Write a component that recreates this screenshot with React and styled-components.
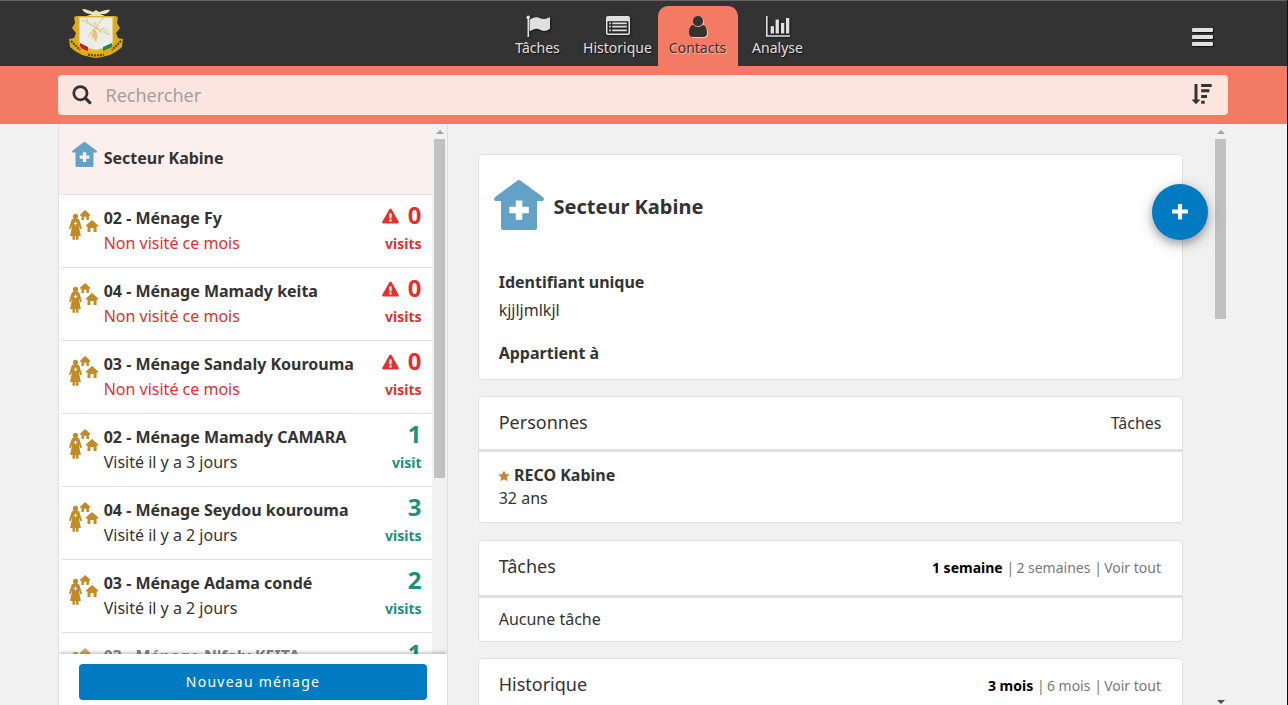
import React from "react";
import styled, { createGlobalStyle, css } from "styled-components";

const colors = {
  ink: "#333333",
  coral: "#f47b63",
  line: "#e0e0e0",
  page: "#f1f1f1",
  red: "#e33030",
  green: "#218e7f",
  blue: "#007ac0",
  gold: "#c38a28",
  house: "#63a2c6",
};

const GlobalStyle = createGlobalStyle`
  *, *::before, *::after { box-sizing: border-box; }
  html, body { margin: 0; height: 100%; overflow: hidden; }
  body { font: 16px/25px "Noto Sans", sans-serif; color: ${colors.ink}; background: ${colors.page}; }
  button { font: inherit; border: 0; padding: 0; margin: 0; background: none; color: inherit; }
  svg { display: block; flex: none; }
  h1, h2, p { margin: 0; }
`;

const Page = styled.div`
  height: 705px;
  display: flex;
  flex-direction: column;
  overflow: hidden;
  border-right: 1px solid #111;
`;

const TopBar = styled.header`
  height: 66px;
  flex: none;
  display: grid;
  grid-template-columns: 497.5px 320px 1fr;
  background: #333;
  border-top: 1px solid #626562;
`;

const LogoSlot = styled.div`
  padding: 6px 0 0 66px;
`;

const Tabs = styled.nav`
  display: flex;
  padding-top: 5px;
`;

const Tab = styled.a`
  width: 80px;
  display: flex;
  flex-direction: column;
  align-items: center;
  padding-top: 8px;
  font-size: 14px;
  line-height: 20px;
  color: #e0e0e0;
  text-shadow: 1px 1px 1px rgba(0, 0, 0, 0.75);
  border-radius: 10px 10px 0 0;
  svg { filter: drop-shadow(1px 1px 1px rgba(0, 0, 0, 0.6)); }
  ${(p) => p.$active && css`
    background: ${colors.coral};
    color: ${colors.ink};
    text-shadow: 1px 1px 1px rgba(255, 255, 255, 0.5);
    svg { filter: drop-shadow(1px 1px 0.5px rgba(255, 255, 255, 0.5)); }
  `}
`;

const MenuButton = styled.button`
  justify-self: end;
  align-self: start;
  margin: 27px 74px 0 0;
  display: flex;
  flex-direction: column;
  gap: 3px;
`;

const MenuBar = styled.span`
  width: 21px;
  height: 4px;
  border-radius: 1px;
  background: #e0e0e0;
  box-shadow: 1px 1px 1px rgba(0, 0, 0, 0.7);
`;

const SearchBar = styled.div`
  height: 58px;
  flex: none;
  background: ${colors.coral};
  padding: 9px 59px 0 58px;
`;

const SearchField = styled.div`
  height: 40px;
  display: flex;
  align-items: center;
  border-radius: 4px;
  background: #fde5df;
  padding: 0 16px 0 14px;
`;

const SearchInput = styled.input`
  flex: 1;
  min-width: 0;
  margin-left: 13.5px;
  padding: 0;
  border: 0;
  outline: 0;
  background: transparent;
  font: 18px/26px "Noto Sans", sans-serif;
  &::placeholder { color: #a0a0a0; opacity: 1; }
`;

const Body = styled.main`
  flex: 1;
  min-height: 0;
  display: flex;
  padding: 0 59px 0 58px;
`;

const Sidebar = styled.section`
  width: 390px;
  flex: none;
  display: flex;
  flex-direction: column;
  background: #fff;
  border: solid ${colors.line};
  border-width: 0 1px;
`;

const SidebarScroll = styled.div`
  flex: 1;
  min-height: 0;
  display: flex;
  overflow: hidden;
`;

const ContactList = styled.div`
  flex: 1;
  min-width: 0;
`;

const ContactRow = styled.div`
  height: ${(p) => (p.$selected ? 71 : 73)}px;
  display: flex;
  padding: ${(p) => (p.$selected ? "18px 10px 0 12.5px" : "10px 10.5px 0 9.5px")};
  background: ${(p) =>
    p.$selected
      ? `linear-gradient(90deg, transparent 2px, ${colors.line} 3px) bottom / 100% 1px no-repeat, #fcf0ee`
      : `linear-gradient(90deg, transparent 2px, ${colors.line} 3px) bottom / 100% 1px no-repeat`};
`;

const RowText = styled.div`
  flex: 1;
  min-width: 0;
  padding-left: ${(p) => (p.$selected ? 7.2 : 5.2)}px;
  padding-top: ${(p) => (p.$selected ? 4 : 1)}px;
  white-space: nowrap;
  opacity: ${(p) => (p.$faded ? 0.6 : 1)};
`;

const IconSlot = styled.div`
  padding-top: ${(p) => p.$top || 0}px;
  opacity: ${(p) => (p.$faded ? 0.75 : 1)};
`;

const Name = styled.div`
  font-weight: 700;
`;

const Status = styled.div`
  color: ${(p) => (p.$late ? colors.red : colors.ink)};
`;

const Visits = styled.div`
  display: flex;
  flex-direction: column;
  align-items: flex-end;
  font-weight: 700;
  color: ${(p) => (p.$late ? colors.red : colors.green)};
`;

const Count = styled.div`
  display: flex;
  align-items: center;
  gap: 8.5px;
  font-size: 24px;
  line-height: 24px;
  height: 26px;
  padding-bottom: 7px;
  svg { margin-top: 2px; }
`;

const Unit = styled.div`
  font-size: 14px;
  line-height: 26px;
`;

const SidebarFooter = styled.footer`
  height: 51px;
  flex: none;
  position: relative;
  background: #fff;
  padding: 10px 20px 0;
  box-shadow: 0 -1px 4px rgba(0, 0, 0, 0.3);
  clip-path: inset(-8px 0 0 0);
`;

const PrimaryButton = styled.button`
  width: 100%;
  height: 36px;
  border-radius: 4px;
  background: ${colors.blue};
  color: #fff;
  font-size: 14px;
  letter-spacing: 1.25px;
  line-height: 36px;
`;

const ScrollTrack = styled.div`
  width: 15px;
  flex: none;
  display: flex;
  flex-direction: column;
  align-items: center;
  background: ${colors.page};
`;

const Arrow = styled.span`
  margin: ${(p) => (p.$down ? "auto 0 1px" : "6px 0 5px")};
  border: solid transparent;
  border-width: 0 4px;
  ${(p) => (p.$down ? "border-top: 4px solid #505050" : "border-bottom: 4px solid #a3a3a3")};
`;

const Thumb = styled.span`
  width: 11px;
  height: ${(p) => p.$size}px;
  background: #c1c1c1;
`;

const Detail = styled.section`
  position: relative;
  flex: 1;
  min-width: 0;
  display: flex;
  overflow: hidden;
`;

const Cards = styled.div`
  flex: 1;
  min-width: 0;
  padding: 30px 30px 0;
`;

const Card = styled.article`
  height: ${(p) => p.$height}px;
  margin-bottom: ${(p) => p.$gap || 16}px;
  background: #fff;
  border: 1px solid ${colors.line};
  border-radius: 4px;
  overflow: hidden;
`;

const ProfileHeader = styled.div`
  display: flex;
  align-items: center;
  height: 50px;
  margin: 25px 15px 38px;
  gap: 9.5px;
`;

const ProfileName = styled.h1`
  font-size: 20px;
  line-height: 30px;
  margin-top: 3px;
`;

const Field = styled.div`
  padding: 0 19.7px;
  line-height: 28px;
  margin-bottom: 15px;
`;

const Label = styled.div`
  font-weight: 700;
`;

const CardHeader = styled.div`
  height: ${(p) => p.$height || 55}px;
  border-bottom: 3px solid ${colors.line};
  display: flex;
  align-items: center;
  justify-content: space-between;
  padding: 0 21px ${(p) => (p.$height ? 4 : 2)}px 19.7px;
`;

const CardTitle = styled.h2`
  font-size: 18px;
  font-weight: 400;
  line-height: 26px;
`;

const ColumnLabel = styled.span`
  padding-top: 2px;
  margin-right: -0.5px;
`;

const Filters = styled.div`
  display: flex;
  font-size: 14px;
  color: #777;
  padding-top: 2px;
  b { color: #000; }
`;

const Separator = styled.span`
  margin: 0 2.2px 0 3.8px;
`;

const Person = styled.div`
  padding: 12px 19.7px 0;
  line-height: 23px;
  ${Name} { display: flex; align-items: center; gap: 3.5px; }
  svg { margin-left: -0.7px; margin-right: 0.5px; }
`;

const EmptyText = styled.p`
  padding: 9px 19.7px;
`;

const Fab = styled.button`
  position: absolute;
  top: 60px;
  left: 704px;
  width: 56px;
  height: 56px;
  border-radius: 50%;
  background: ${colors.blue};
  display: flex;
  align-items: center;
  justify-content: center;
  box-shadow: 0 4px 8px rgba(0, 0, 0, 0.3), 0 4px 20px rgba(0, 0, 0, 0.14);
`;

const FlagIcon = () => (
  <svg width="24" height="24" viewBox="0 0 24 24" fill="currentColor">
    <circle cx="2.2" cy="3.4" r="1.8" />
    <path d="M1.500 4h1.600v19H1.500zM4 5.500C6 4.500 8 3.200 10.300 3.200c3 0 4.500 1.900 7.300 1.900 2.200 0 4-1 5.400-1.700.6-.3 1 0 1 .6v10.200c0 .5-.2.8-.6 1-1.600.8-3.200 1.700-5.400 1.700-3.200 0-4.500-2.200-7.500-2.200-2.200 0-4.200 1.200-6 2.100-.4.200-.9 0-.9-.6V6.300c0-.4.100-.6.400-.8z" />
  </svg>
);

const ListIcon = () => (
  <svg width="24" height="24" viewBox="0 0 24 24" fill="currentColor">
    <path fillRule="evenodd" d="M2 2h20a2 2 0 0 1 2 2v15a2 2 0 0 1-2 2H2a2 2 0 0 1-2-2V4a2 2 0 0 1 2-2zM2 7.200c-.3 0-.5.200-.5.500v11.100c0 .4.200.6.500.6h20c.3 0 .5-.2.500-.6V7.700c0-.3-.2-.5-.5-.5z" />
    <path d="M3.200 8.600h1.700v1.600H3.200zM6.300 8.600h14.500v1.600H6.300zM3.200 11.800h1.700v1.600H3.200zM6.300 11.800h14.500v1.600H6.300zM3.200 15.600h1.700v1.600H3.200zM6.300 15.600h14.500v1.600H6.300z" />
  </svg>
);

const UserIcon = () => (
  <svg width="24" height="24" viewBox="0 0 24 24" fill="currentColor">
    <circle cx="12" cy="7.100" r="5.100" />
    <path d="M7.500 11c1.200 1.200 2.700 1.900 4.500 1.900s3.300-.7 4.500-1.900c3.300.1 4.500 3.700 4.500 7.900 0 2.400-1.500 4-3.500 4h-11c-2 0-3.500-1.600-3.500-4 0-4.200 1.200-7.800 4.500-7.900z" />
  </svg>
);

const ChartIcon = () => (
  <svg width="26" height="24" viewBox="0 0 26 24" fill="currentColor">
    <path d="M1 2h1.600v19.200H25v1.600H1zM5.700 12.200H9v7.200H5.700zM10.600 5.600h3.300v13.800h-3.300zM16 8.900h3.300v10.500H16zM21 4h3.300v15.400H21z" />
  </svg>
);

const SearchIcon = () => (
  <svg width="20" height="20" viewBox="0 0 20 20" fill="none" stroke="#333">
    <circle cx="8.400" cy="8.200" r="6.600" strokeWidth="2.800" />
    <path d="M13.300 13.100l4.500 4.500" strokeWidth="3.200" strokeLinecap="round" />
  </svg>
);

const SortIcon = () => (
  <svg width="20" height="22" viewBox="0 0 20 22" fill="#333">
    <path d="M2.500 0h3v15.600h2c.5 0 .6.400.3.700l-3.400 3.400c-.3.300-.6.300-.9 0L.200 16.300c-.3-.3-.1-.7.3-.7h2zM9.200 0h10.500v3H9.200zM9.200 5.200h8.200v3H9.200zM9.200 11h5.800v3H9.200zM9.200 16.700h3.500v3H9.200z" />
  </svg>
);

const HouseIcon = ({ size }) => (
  <svg width={size} height={size} viewBox="0 0 50 50" fill={colors.house}>
    <path fillRule="evenodd" d="M23.200.7c1.100-.8 2.500-.8 3.600 0l22 16.200c2 1.500 1.200 4.200-1.300 4.200H43V47.500a2.500 2.500 0 0 1-2.500 2.500h-31A2.500 2.500 0 0 1 7 47.500V21.100H2.500c-2.500 0-3.300-2.700-1.300-4.200zM21.800 20.500v6.300h-6.500v6.500h6.500v6.500h6.500v-6.500h6.500v-6.500h-6.500v-6.300z" />
  </svg>
);

const HouseholdIcon = () => (
  <svg width="30" height="31" viewBox="0 0 30 31" fill={colors.gold}>
    <circle cx="6.500" cy="6.400" r="2.600" />
    <path fillRule="evenodd" d="M4.500 8.700h4c1.100 0 1.700.6 2 1.600l2.300 7.600c.4 1.200-1.300 1.700-1.700.6l-1.300-3L11.900 26H9.500v3.800H7V26H6v3.800H3.500V26H1.100L3.200 15.500l-1.300 3c-.4 1.100-2.100.6-1.700-.6l2.300-7.600c.3-1 .9-1.600 2-1.600zM6 11.800v1.100H4.900v1.200H6v1.100h1.100v-1.100h1.100v-1.200H7.100v-1.100z" />
    <path d="M16.100 0L21.300 4.700v1h-1.400v4.200h-2.500V6.700h-2.500v3.200h-2.400V5.700H11v-1z" />
    <path d="M23 9.900l6.300 5.500v1.200h-1.700v5.300h-3v-4h-3.100v4h-3v-5.300h-1.700v-1.200z" />
  </svg>
);

const WarningIcon = () => (
  <svg width="17" height="16" viewBox="0 0 17 16" fill="currentColor">
    <path fillRule="evenodd" d="M7.400 1.200c.5-.9 1.700-.9 2.200 0l7 12.400c.5.900-.1 1.900-1.100 1.900h-14c-1 0-1.600-1-1.100-1.900zM7.300 5.500l.3 4.900h1.800l.3-4.900zM7.400 11.400v2h2.200v-2z" />
  </svg>
);

const StarIcon = () => (
  <svg width="12" height="12" viewBox="0 0 12 12" fill="#c78330">
    <path d="M6 .5l1.700 3.600 3.900.5-2.800 2.700.7 3.900L6 9.300l-3.500 1.900.7-3.900L.4 4.600l3.900-.5z" />
  </svg>
);

const PlusIcon = () => (
  <svg width="16" height="16" viewBox="0 0 16 16" fill="#fff">
    <path d="M6.900 0h2.200c.6 0 1 .4 1 1v4.900H15c.6 0 1 .4 1 1v2.200c0 .6-.4 1-1 1h-4.900V15c0 .6-.4 1-1 1H6.900c-.6 0-1-.4-1-1v-4.900H1c-.6 0-1-.4-1-1V6.900c0-.6.400-1 1-1h4.900V1c0-.6.4-1 1-1z" transform="translate(0 -.5)" />
  </svg>
);

const CoatOfArms = () => (
  <svg width="60" height="53" viewBox="0 0 60 53">
    <path d="M11 9h38l3 1-1 6 3 5-4 5 2 5 4 1 1-1-1 9-5 4-7 4-8 2-6 1-6-1-8-2-7-4-5-4-1-9 1 1 4-1 2-5-4-5 3-5-1-6z" fill="#dbac18" />
    <path d="M5 34l9 9M55 34l-9 9M22 47.500q8 2 16 0" stroke="#54420e" strokeWidth="2" strokeDasharray="2 1" fill="none" />
    <path d="M13 10h34v25c0 6-9 7-17 10-8-3-17-4-17-10z" fill="#ececea" stroke="#e0b52c" />
    <path d="M14 36l8 4v4c-4-1-7-3-8-5z" fill="#c22035" />
    <path d="M22 41l8 2 7-2v4l-7 1-8-1z" fill="#e8b91c" />
    <path d="M37 40l9-4v4l-9 4z" fill="#138a60" />
    <path d="M16 2c5 0 8 2 11 3l3-2 3 2c3 0 6-3 11-2-3 5-7 4-10 4l5 2H21l5-2c-4 0-8-1-10-5z" fill="#e9e2bb" />
    <path d="M16 13l12 6 16 9M20 12l6 7M37 11l-9 11M29 15v18M28 22l-6 8M30 21l6 5M36 21l6 3" stroke="#dfc47a" strokeWidth="1.200" strokeDasharray="3 1" fill="none" />
    <path d="M27 23l-2 9 3-2 2 6 2-8-3-6z" fill="#dfbd5c" opacity=".7" />
  </svg>
);

const tabs = [
  { label: "Tâches", Icon: FlagIcon },
  { label: "Historique", Icon: ListIcon },
  { label: "Contacts", Icon: UserIcon, active: true },
  { label: "Analyse", Icon: ChartIcon },
];

const households = [
  { name: "02 - Ménage Fy", status: "Non visité ce mois", visits: 0 },
  { name: "04 - Ménage Mamady keita", status: "Non visité ce mois", visits: 0 },
  { name: "03 - Ménage Sandaly Kourouma", status: "Non visité ce mois", visits: 0 },
  { name: "02 - Ménage Mamady CAMARA", status: "Visité il y a 3 jours", visits: 1 },
  { name: "04 - Ménage Seydou kourouma", status: "Visité il y a 2 jours", visits: 3 },
  { name: "03 - Ménage Adama condé", status: "Visité il y a 2 jours", visits: 2 },
  { name: "03 - Ménage N'faly KEITA", visits: 1, faded: true },
];

const FilterGroup = ({ options }) => (
  <Filters>
    {options.map((option, i) => (
      <React.Fragment key={option}>
        {i > 0 && <Separator>|</Separator>}
        {i === 0 ? <b>{option}</b> : <span>{option}</span>}
      </React.Fragment>
    ))}
  </Filters>
);

export default function App() {
  return (
    <Page>
      <GlobalStyle />
      <TopBar>
        <LogoSlot><CoatOfArms /></LogoSlot>
        <Tabs>
          {tabs.map(({ label, Icon, active }) => (
            <Tab key={label} $active={active}>
              <Icon />
              {label}
            </Tab>
          ))}
        </Tabs>
        <MenuButton aria-label="Menu"><MenuBar /><MenuBar /><MenuBar /></MenuButton>
      </TopBar>
      <SearchBar>
        <SearchField>
          <SearchIcon />
          <SearchInput placeholder="Rechercher" />
          <SortIcon />
        </SearchField>
      </SearchBar>
      <Body>
        <Sidebar>
          <SidebarScroll>
            <ContactList>
              <ContactRow $selected>
                <IconSlot><HouseIcon size={25} /></IconSlot>
                <RowText $selected><Name>Secteur Kabine</Name></RowText>
              </ContactRow>
              {households.map(({ name, status, visits, faded }) => (
                <ContactRow key={name}>
                  <IconSlot $top={5} $faded={faded}><HouseholdIcon /></IconSlot>
                  <RowText $faded={faded}>
                    <Name>{name}</Name>
                    {status && <Status $late={visits === 0}>{status}</Status>}
                  </RowText>
                  <Visits $late={visits === 0}>
                    <Count>{visits === 0 && <WarningIcon />}{visits}</Count>
                    {status && <Unit>{visits === 1 ? "visit" : "visits"}</Unit>}
                  </Visits>
                </ContactRow>
              ))}
            </ContactList>
            <ScrollTrack><Arrow /><Thumb $size={339} /></ScrollTrack>
          </SidebarScroll>
          <SidebarFooter><PrimaryButton>Nouveau ménage</PrimaryButton></SidebarFooter>
        </Sidebar>
        <Detail>
          <Cards>
            <Card $height={226}>
              <ProfileHeader>
                <HouseIcon size={50} />
                <ProfileName>Secteur Kabine</ProfileName>
              </ProfileHeader>
              <Field><Label>Identifiant unique</Label>kjjljmlkjl</Field>
              <Field><Label>Appartient à</Label></Field>
            </Card>
            <Card $height={127} $gap={17}>
              <CardHeader><CardTitle>Personnes</CardTitle><ColumnLabel>Tâches</ColumnLabel></CardHeader>
              <Person>
                <Name><StarIcon />RECO Kabine</Name>
                <div>32 ans</div>
              </Person>
            </Card>
            <Card $height={102}>
              <CardHeader $height={57}>
                <CardTitle>Tâches</CardTitle>
                <FilterGroup options={["1 semaine", "2 semaines", "Voir tout"]} />
              </CardHeader>
              <EmptyText>Aucune tâche</EmptyText>
            </Card>
            <Card $height={102}>
              <CardHeader $height={57}>
                <CardTitle>Historique</CardTitle>
                <FilterGroup options={["3 mois", "6 mois", "Voir tout"]} />
              </CardHeader>
            </Card>
          </Cards>
          <ScrollTrack><Arrow /><Thumb $size={180} /><Arrow $down /></ScrollTrack>
          <Fab aria-label="Ajouter"><PlusIcon /></Fab>
        </Detail>
      </Body>
    </Page>
  );
}
